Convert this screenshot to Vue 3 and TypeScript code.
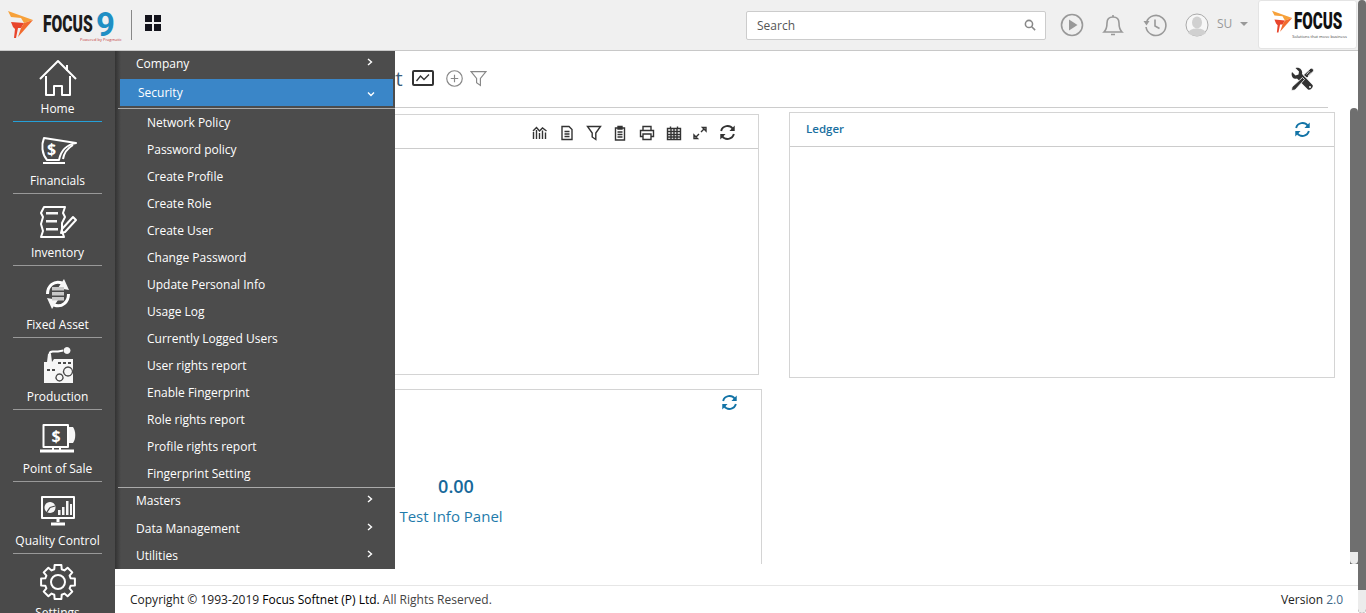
<template>
  <div class="app">
    <header class="topbar">
      <div class="brand">
        <svg class="flame" viewBox="0 0 26 28">
          <path fill="#f7a13a" d="M0 0 L25 9 L16 12 L13 7 L3 6 Z" />
          <path fill="#e8452c" d="M3 11 L16 12 L13 17 L10 17 L8 27 L6 27 L7 18 L5 16 Z" />
          <path fill="#f26b2e" d="M16 12 L25 9 L10 26 L13 17 Z" />
        </svg>
        <span class="brand-word">FOCUS</span>
        <span class="brand-nine">9</span>
        <span class="brand-sub">Powered by Pragmatic</span>
      </div>
      <div class="top-sep"></div>
      <div class="apps-grid"><i></i><i></i><i></i><i></i></div>

      <div class="top-right">
        <div class="search">
          <span>Search</span>
          <svg viewBox="0 0 14 14" class="search-icon">
            <circle cx="5.8" cy="5.8" r="4.2" />
            <path d="M9 9l4 4" />
          </svg>
        </div>
        <svg class="top-icon play" viewBox="0 0 24 24">
          <circle cx="12" cy="12" r="10.5" />
          <path class="solid" d="M9 6.5 L17.5 12 L9 17.5 Z" />
        </svg>
        <svg class="top-icon bell" viewBox="0 0 24 24">
          <path d="M3 19 C6 16 6 13 6 10 C6 6 8.500 4 12 4 C15.500 4 18 6 18 10 C18 13 18 16 21 19 Z" />
          <path d="M12 4V2M10 21.500h4" />
        </svg>
        <svg class="top-icon history" viewBox="0 0 24 24">
          <path d="M3.500 9 A10 10 0 1 1 3 14" />
          <path class="solid" d="M0.500 8 L6.500 8 L3.500 12.500 Z" />
          <path d="M12 6.500V13l4.500 2.500" />
        </svg>
        <div class="user">
          <svg class="avatar" viewBox="0 0 24 24">
            <circle class="avatar-bg" cx="12" cy="12" r="11" />
            <ellipse class="avatar-head" cx="12" cy="9.500" rx="5" ry="6" />
            <path class="avatar-head" d="M3 20 C5 16 9 15.500 12 15.500 C15 15.500 19 16 21 20 C17 24 7 24 3 20 Z" />
          </svg>
          <span class="user-name">SU</span>
          <span class="caret"></span>
        </div>
        <div class="company-logo">
          <div class="company-row">
            <svg class="flame small" viewBox="0 0 26 28">
              <path fill="#f7a13a" d="M0 0 L25 9 L16 12 L13 7 L3 6 Z" />
              <path fill="#e8452c" d="M3 11 L16 12 L13 17 L10 17 L8 27 L6 27 L7 18 L5 16 Z" />
              <path fill="#f26b2e" d="M16 12 L25 9 L10 26 L13 17 Z" />
            </svg>
            <span class="company-word">FOCUS</span>
          </div>
          <span class="company-sub">Solutions that move business</span>
        </div>
      </div>
    </header>

    <div class="body">
      <nav class="sidebar">
        <a v-for="(item, i) in navItems" :key="item.label" class="nav-item" :class="{ first: i === 0 }">
          <svg class="nav-icon" viewBox="0 0 40 40">
            <path
              v-for="(p, j) in item.paths"
              :key="j"
              :d="p.d"
              :class="'nav-' + (p.kind ?? 'line')"
            />
            <text v-if="item.sign" class="nav-sign" :x="item.sign.x" :y="item.sign.y">$</text>
          </svg>
          <span class="nav-label">{{ item.label }}</span>
        </a>
      </nav>

      <div class="main">
        <div class="content">
          <div class="title-row">
            <span class="title">Dashboard Report</span>
            <svg class="chart-btn" viewBox="0 0 22 16">
              <rect x="1" y="1" width="20" height="14" rx="1" />
              <path d="M4.500 11 L8.500 6 L12 9.500 L17 4.500" />
            </svg>
            <svg class="title-icon add" viewBox="0 0 16 16">
              <circle cx="8" cy="8" r="7.300" />
              <path d="M8 4.500v7M4.500 8h7" />
            </svg>
            <svg class="title-icon filter" viewBox="0 0 16 16">
              <path d="M1 1.500h14L9.800 8v6.500L6.200 12V8Z" />
            </svg>
            <svg class="tools" viewBox="0 0 24 24">
              <path class="tool-solid" d="M2 5 L5.500 8.500 L8.500 7.500 L9 4.500 L5.500 1 C9.500 -0.500 13 3 12 7 L22.500 18 C24 20 20 24 18 22.500 L7 11.500 C3.500 13 0.500 9.500 2 5 Z" />
              <circle class="tool-hole" cx="20" cy="20" r="1" />
              <path class="tool-driver" d="M21 1 C23 1.500 24 3 23.500 4 L17 11 L13.500 8 Z M12.500 10.500 L14.500 12.500 L5 23 L1.500 23.500 L2 20 Z" />
              <path class="tool-stripe" d="M19.500 4 L16.500 7.500 M21 5.500 L18 9" />
            </svg>
          </div>

          <div class="panels">
            <div class="col-left">
              <section class="panel report-panel">
                <div class="panel-head">
                  <div class="head-tools">
                    <svg v-for="t in panelTools" :key="t.name" class="tool-icon" viewBox="0 0 16 16">
                      <path :d="t.d" />
                    </svg>
                    <svg class="tool-icon refresh dark" viewBox="0 0 16 16">
                      <path d="M2 6.500A6.200 6.200 0 0 1 13 4.500M14 9.500A6.200 6.200 0 0 1 3 11.500" />
                      <path class="solid" d="M14.800 1.500v5h-5ZM1.200 14.500v-5h5Z" />
                    </svg>
                  </div>
                </div>
              </section>

              <section class="panel info-panel">
                <svg class="tool-icon refresh info-refresh" viewBox="0 0 16 16">
                  <path d="M2 6.500A6.200 6.200 0 0 1 13 4.500M14 9.500A6.200 6.200 0 0 1 3 11.500" />
                  <path class="solid" d="M14.800 1.500v5h-5ZM1.200 14.500v-5h5Z" />
                </svg>
                <div class="info-value">0.00</div>
                <div class="info-name">Test Info Panel</div>
              </section>
            </div>

            <section class="panel ledger-panel">
              <div class="panel-head ledger-head">
                <span class="panel-title">Ledger</span>
                <svg class="tool-icon refresh" viewBox="0 0 16 16">
                  <path d="M2 6.500A6.200 6.200 0 0 1 13 4.500M14 9.500A6.200 6.200 0 0 1 3 11.500" />
                  <path class="solid" d="M14.800 1.500v5h-5ZM1.200 14.500v-5h5Z" />
                </svg>
              </div>
            </section>
          </div>
        </div>

        <footer class="footer">
          <span>Copyright © 1993-2019 <b>Focus Softnet (P) Ltd.</b> <em>All Rights Reserved.</em></span>
          <span>Version <em class="ver">2.0</em></span>
        </footer>
      </div>
    </div>

    <!-- flyout sits over the dashboard -->
    <aside class="flyout">
      <div v-for="m in menuBefore" :key="m" class="menu-row">
        <span>{{ m }}</span>
        <svg class="chev" viewBox="0 0 8 8"><path d="M2 1l3.500 3L2 7" /></svg>
      </div>
      <div class="menu-active">
        <span>Security</span>
        <svg class="chev down" viewBox="0 0 8 8"><path d="M1 2.500l3 3 3-3" /></svg>
      </div>
      <div class="sub-list">
        <div v-for="s in securityItems" :key="s" class="sub-row">{{ s }}</div>
      </div>
      <div v-for="m in menuAfter" :key="m" class="menu-row">
        <span>{{ m }}</span>
        <svg class="chev" viewBox="0 0 8 8"><path d="M2 1l3.500 3L2 7" /></svg>
      </div>
    </aside>

    <div class="scroll-outer"><div class="thumb-end"></div></div>
    <div class="scroll-inner"><div class="thumb-end"></div></div>
  </div>
</template>

<script setup lang="ts">
type PathKind = 'line' | 'thick' | 'fill' | 'grey' | 'dark' | 'cut';

interface IconPath {
  d: string;
  kind?: PathKind;
}

interface NavItem {
  label: string;
  paths: IconPath[];
  sign?: { x: number; y: number };
}

const gearPath = (): string => {
  const pts: string[] = [];
  const teeth = 8;
  for (let i = 0; i < teeth; i++) {
    const a = (i / teeth) * Math.PI * 2 - Math.PI / 2;
    const step = Math.PI / teeth;
    const corners: [number, number][] = [
      [a - step * 0.5, 17.2],
      [a + step * 0.5, 17.2],
      [a + step * 0.72, 13.2],
      [a + step * 1.28, 13.2],
    ];
    corners.forEach(([ang, r]) => {
      pts.push(`${(20 + r * Math.cos(ang)).toFixed(1)} ${(20 + r * Math.sin(ang)).toFixed(1)}`);
    });
  }
  return `M${pts.join(' L')} Z`;
};

const navItems: NavItem[] = [
  {
    label: 'Home',
    paths: [
      { d: 'M2 21 L20 3 L38 21' },
      { d: 'M29 7v6' },
      { d: 'M8 18 V37 H16 V28 H24 V37 H32 V18' },
    ],
  },
  {
    label: 'Financials',
    sign: { x: 9, y: 25 },
    paths: [
      { d: 'M6 8 L38 13 C28 15 23 20 21 30 H9 C4 24 3 15 6 8 Z' },
      { d: 'M25 29 C26 23 30 18 35 15' },
      { d: 'M5 33 H27' },
    ],
  },
  {
    label: 'Inventory',
    paths: [
      { d: 'M6 5 H27 L25 11 L27 15 L24 21 V29 L26 35 H3 L5 29 L3 22 L5 15 L3 11 Z' },
      { d: 'M8 10 H20 V12.500 H8 Z M8 18 H19 V20.500 H8 Z M8 26 H20 V28.500 H8 Z', kind: 'fill' },
      { d: 'M24 27 L35 15 L38 18 L27 30 L23 31 Z' },
    ],
  },
  {
    label: 'Fixed Asset',
    paths: [
      { d: 'M9.500 20 C9.500 12 16 6 24 9', kind: 'thick' },
      { d: 'M31 16 L20 14 L26 5 Z', kind: 'fill' },
      { d: 'M30.500 20 C30.500 28 24 34 16 31', kind: 'thick' },
      { d: 'M9 24 L20 26 L14 35 Z', kind: 'fill' },
      { d: 'M14 13 H26 V16.500 H14 Z M14 18 H26 V21.500 H14 Z M14 23 H26 V26.500 H14 Z', kind: 'grey' },
    ],
  },
  {
    label: 'Production',
    paths: [
      { d: 'M9 16 L10 8 L13 8 L14 16 L16 13 H35 V37 H6 V16 Z', kind: 'fill' },
      { d: 'M11.500 8 C12 4 15 6 18 5.500 C20 5.500 22 5 25 4.500' },
      { d: 'M29 1 a3.500 3.500 0 1 0 .01 0 Z', kind: 'fill' },
      { d: 'M20 16 h3 v2 h-3 Z M25 16 h3 v2 h-3 Z M30 16 h3 v2 h-3 Z M9 23 h3 v2 h-3 Z M14 23 h3 v2 h-3 Z', kind: 'dark' },
      { d: 'M30 21 a4.500 4.500 0 1 0 .01 0 Z M21.500 28 a3.500 3.500 0 1 0 .01 0 Z', kind: 'cut' },
    ],
  },
  {
    label: 'Point of Sale',
    sign: { x: 13.500, y: 24 },
    paths: [
      { d: 'M5.500 7 H30 V29 H5.500 Z' },
      { d: 'M31 9 H35 C38 13 38 21 35 25 H31 Z', kind: 'fill' },
      { d: 'M15 29 V32 M22 29 V32' },
      { d: 'M2 33 H36', kind: 'thick' },
    ],
  },
  {
    label: 'Quality Control',
    paths: [
      { d: 'M4 7 H36 V28 H4 Z' },
      { d: 'M12 12 a5.500 5.500 0 1 0 .01 0 Z', kind: 'fill' },
      { d: 'M12 17.500 L17 16 M12 17.500 L9 22', kind: 'cut' },
      { d: 'M20 20 h2.500 v5 h-2.500 Z M24 17 h2.500 v8 h-2.500 Z M28 11 h2.500 v14 h-2.500 Z M32 14 h2 v11 h-2 Z', kind: 'fill' },
      { d: 'M20 28 V32 M13 34 H27', kind: 'thick' },
    ],
  },
  {
    label: 'Settings',
    paths: [{ d: gearPath() }, { d: 'M27 20 a7 7 0 1 1 -14 0 a7 7 0 1 1 14 0 Z' }],
  },
];

const panelTools = [
  { name: 'chart', d: 'M1.500 14V7M4.500 14V5M7.500 14V8M10.500 14V5.500M13.500 14V7.500M1 6 L4.500 2.500 L7.500 6 L10.500 3 L14.500 6' },
  { name: 'doc', d: 'M3 1.500h7l3 3V14.500H3ZM5.500 6.500h5M5.500 9h5M5.500 11.500h5' },
  { name: 'filter', d: 'M1.500 1.500h13L9.800 8v6.500L6.200 12V8Z' },
  { name: 'clip', d: 'M3.500 3h9V15h-9ZM6 1.500h4V4H6ZM5.500 7h5M5.500 9.500h5M5.500 12h5' },
  { name: 'print', d: 'M4 5V1.500h8V5M4 11.500H1.500V5.500h13v6H12M4 9h8v5.500H4Z' },
  { name: 'calendar', d: 'M1.500 3.500h13v11h-13ZM1.500 6.500h13M1.500 9.500h13M1.500 12h13M5 3.500v11M8 3.500v11M11 3.500v11M4.500 1.500v2M11.500 1.500v2' },
  { name: 'expand', d: 'M10.500 2.500h3.500v3.500ZM9 7l3-3M5.500 13.500H2V10ZM7 9l-3 3' },
];

const menuBefore = ['Company'];
const menuAfter = ['Masters', 'Data Management', 'Utilities'];

const securityItems = [
  'Network Policy',
  'Password policy',
  'Create Profile',
  'Create Role',
  'Create User',
  'Change Password',
  'Update Personal Info',
  'Usage Log',
  'Currently Logged Users',
  'User rights report',
  'Enable Fingerprint',
  'Role rights report',
  'Profile rights report',
  'Fingerprint Setting',
];
</script>

<style>
html,
body {
  margin: 0;
  height: 100%;
  overflow: hidden;
  background: #fff;
}
</style>

<style scoped>
.app {
  position: relative;
  width: 1366px;
  height: 613px;
  overflow: hidden;
  display: flex;
  flex-direction: column;
  font-family: "Open Sans", "Liberation Sans", sans-serif;
  font-size: 12px;
  color: #444;
}

.topbar {
  height: 50px;
  flex: none;
  display: flex;
  align-items: center;
  background: #f0f0f0;
  border-bottom: 1px solid #c8c8c8;
  padding-left: 8px;
}

.brand {
  position: relative;
  width: 123px;
  height: 30px;
  display: flex;
  align-items: center;
}

.flame {
  width: 26px;
  height: 28px;
  flex: none;
}

.flame.small {
  width: 21px;
  height: 24px;
}

.brand-word {
  margin-left: 9px;
  width: 50px;
  font-family: "Roboto", sans-serif;
  font-weight: 900;
  font-size: 23px;
  line-height: 22px;
  color: #1b1b1b;
  display: inline-block;
  transform: scaleX(0.68);
  transform-origin: left center;
  white-space: nowrap;
}

.brand-nine {
  margin-left: 3px;
  font-family: "Roboto", sans-serif;
  font-weight: 700;
  font-size: 33px;
  line-height: 22px;
  color: #1f8fc4;
}

.brand-sub {
  position: absolute;
  left: 72px;
  top: 27px;
  font-size: 4px;
  line-height: 5px;
  color: #c43a3a;
  white-space: nowrap;
}

.top-sep {
  width: 1px;
  height: 30px;
  background: #888;
}

.apps-grid {
  margin-left: 13px;
  width: 16px;
  height: 16px;
  margin-top: -4px;
  display: grid;
  grid-template-columns: 7px 7px;
  grid-template-rows: 7px 7px;
  gap: 2px;
}

.apps-grid i {
  background: #14141c;
}

.top-right {
  margin-left: auto;
  display: flex;
  align-items: center;
  height: 100%;
  padding-right: 9px;
}

.search {
  width: 279px;
  height: 27px;
  border: 1px solid #ccc;
  border-radius: 2px;
  background: #fff;
  display: flex;
  align-items: center;
  justify-content: space-between;
  padding: 0 9px 0 10px;
  font-size: 12px;
  color: #555;
}

.search-icon {
  width: 12px;
  height: 12px;
  fill: none;
  stroke: #888;
  stroke-width: 1.800;
}

.top-icon {
  fill: none;
  stroke: #999;
  stroke-width: 1.600;
  width: 24px;
  height: 24px;
  flex: none;
}

.top-icon .solid {
  fill: #999;
  stroke: none;
}

.play {
  margin-left: 14px;
}

.bell {
  margin-left: 17px;
}

.history {
  margin-left: 18px;
}

.user {
  display: flex;
  align-items: center;
  margin-left: 18px;
  width: 73px;
}

.avatar {
  width: 24px;
  height: 24px;
  flex: none;
}

.avatar-bg {
  fill: #f7f7f7;
  stroke: #aaa;
  stroke-width: 1;
}

.avatar-head {
  fill: #d0d0d0;
}

.user-name {
  margin-left: 8px;
  font-size: 12px;
  color: #999;
  margin-top: -3px;
}

.caret {
  margin-left: 8px;
  margin-top: -3px;
  border-left: 4px solid transparent;
  border-right: 4px solid transparent;
  border-top: 4px solid #999;
}

.company-logo {
  width: 97px;
  height: 47px;
  background: #fff;
  border: 1px solid #e4e4e4;
  border-radius: 3px;
  display: flex;
  flex-direction: column;
  align-items: center;
  justify-content: center;
  margin-top: -1px;
}

.company-row {
  display: flex;
  align-items: center;
  height: 24px;
  width: 72px;
}

.company-word {
  margin-left: 1px;
  font-family: "Roboto", sans-serif;
  font-weight: 900;
  font-size: 23px;
  line-height: 24px;
  color: #111;
  display: inline-block;
  transform: scaleX(0.66);
  transform-origin: left center;
}

.company-sub {
  font-size: 4px;
  line-height: 5px;
  color: #444;
  margin-left: 24px;
  white-space: nowrap;
}

.body {
  flex: 1;
  display: flex;
  min-height: 0;
}

.sidebar {
  width: 115px;
  flex: none;
  background: #4a4a4a;
  overflow: hidden;
}

.nav-item {
  display: flex;
  flex-direction: column;
  align-items: center;
  height: 72px;
  margin: 0 13px;
  padding-top: 8px;
  box-sizing: border-box;
  border-bottom: 1px solid #999;
}

.nav-item.first {
  border-bottom-color: #25a0d8;
  height: 71px;
  padding-top: 7px;
}

.nav-icon {
  width: 40px;
  height: 40px;
  flex: none;
}

.nav-line {
  fill: none;
  stroke: #fff;
  stroke-width: 2;
  stroke-linejoin: round;
}

.nav-thick {
  fill: none;
  stroke: #fff;
  stroke-width: 3;
}

.nav-fill {
  fill: #f6f6f6;
}

.nav-grey {
  fill: #c9c9c9;
}

.nav-dark {
  fill: #4a4a4a;
}

.nav-cut {
  fill: none;
  stroke: #4a4a4a;
  stroke-width: 1.300;
}

.nav-sign {
  fill: #fff;
  font-family: "Open Sans", sans-serif;
  font-weight: 700;
  font-size: 16px;
}

.nav-label {
  margin-top: 1px;
  line-height: 20px;
  font-size: 12px;
  color: #fff;
  white-space: nowrap;
}

.main {
  flex: 1;
  min-width: 0;
  display: flex;
  flex-direction: column;
  background: #fff;
}

.content {
  height: 513px;
  flex: none;
  overflow: hidden;
  padding: 0 31px 0 15px;
}

.title-row {
  height: 54px;
  padding-bottom: 2px;
  display: flex;
  align-items: center;
  border-bottom: 1px solid #ccc;
  margin-right: 7px;
  padding-left: 101px;
}

.title {
  width: 171px;
  font-size: 20px;
  color: #3a5d78;
  white-space: nowrap;
}

.chart-btn {
  width: 22px;
  height: 16px;
  margin-left: 10px;
  fill: none;
  stroke: #333;
}

.chart-btn rect {
  stroke-width: 2;
}

.chart-btn path {
  stroke-width: 1.300;
}

.title-icon {
  width: 17px;
  height: 17px;
  fill: none;
  stroke: #888;
  stroke-width: 1.100;
}

.add {
  margin-left: 12px;
}

.filter {
  margin-left: 7px;
}

.tools {
  width: 24px;
  height: 24px;
  margin-left: auto;
  margin-right: 14px;
  margin-top: 1px;
}

.tool-solid {
  fill: #333;
}

.tool-hole {
  fill: #fff;
}

.tool-driver {
  fill: #333;
  stroke: #fff;
  stroke-width: 0.800;
}

.tool-stripe {
  fill: none;
  stroke: #fff;
  stroke-width: 0.800;
}

.panels {
  display: grid;
  grid-template-columns: 632px 546px;
  column-gap: 27px;
  padding-top: 4px;
  align-items: start;
}

.col-left {
  display: flex;
  flex-direction: column;
}

.panel {
  border: 1px solid #d4d4d4;
  box-sizing: border-box;
  background: #fff;
}

.report-panel {
  margin-top: 2px;
  height: 261px;
  width: 629px;
}

.panel-head {
  height: 34px;
  box-sizing: border-box;
  border-bottom: 1px solid #ccc;
  display: flex;
  align-items: center;
}

.head-tools {
  margin-left: auto;
  display: flex;
  align-items: center;
  gap: 10.700px;
  padding-right: 22px;
  margin-top: 2px;
}

.tool-icon {
  width: 16px;
  height: 16px;
  flex: none;
  fill: none;
  stroke: #333;
  stroke-width: 1.400;
}

.refresh {
  stroke: #1273a6;
  stroke-width: 1.800;
  width: 17px;
  height: 17px;
}

.refresh .solid {
  fill: #1273a6;
  stroke: none;
}

.refresh.dark {
  stroke: #333;
}

.refresh.dark .solid {
  fill: #333;
}

.info-panel {
  position: relative;
  margin-top: 14px;
  height: 200px;
  display: flex;
  flex-direction: column;
  align-items: center;
  border-bottom: none;
  padding-top: 82px;
  margin-left: 10px;
}

.info-refresh {
  position: absolute;
  right: 23px;
  top: 4px;
}

.info-value {
  font-size: 18px;
  font-weight: 600;
  line-height: 28px;
  color: #16689a;
  padding-left: 10px;
}

.info-name {
  margin-top: 5px;
  font-size: 15px;
  line-height: 22px;
  color: #1f7bab;
}

.ledger-panel {
  height: 266px;
}

.ledger-head {
  justify-content: space-between;
  padding: 0 23px 0 16px;
}

.panel-title {
  font-size: 11.500px;
  font-weight: 600;
  color: #1a6fa0;
  margin-top: -3px;
}

.footer {
  margin-top: 21px;
  height: 28px;
  border-top: 1px solid #e6e6e6;
  display: flex;
  align-items: center;
  justify-content: space-between;
  padding: 0 23px 0 15px;
  font-size: 12px;
  font-weight: 500;
  color: #222;
}

.footer b {
  font-weight: 500;
  color: #000;
}

.footer em {
  font-style: normal;
  font-weight: 400;
  color: #444;
}

.footer em.ver {
  color: #3f6a8a;
}

.flyout {
  position: absolute;
  left: 115px;
  top: 51px;
  width: 280px;
  height: 518px;
  background: linear-gradient(to right, #333 0, #4c4c4c 6px);
  color: #fff;
}

.menu-row {
  height: 27px;
  display: flex;
  align-items: center;
  justify-content: space-between;
  padding: 0 21px;
}

.menu-row span {
  margin-top: -2px;
}

.sub-list + .menu-row + .menu-row {
  margin-top: 1px;
}

.menu-active {
  margin: 1px 2px 0 5px;
  height: 27px;
  background: #3a86c8;
  display: flex;
  align-items: center;
  justify-content: space-between;
  padding: 0 18px;
}

.menu-active span {
  margin-top: -1px;
}

.chev {
  width: 8px;
  height: 8px;
  fill: none;
  stroke: #fff;
  stroke-width: 1.400;
  margin-top: -6px;
}

.chev.down {
  margin-top: 3px;
}

.sub-list {
  margin: 2px 0 0 3px;
  border-top: 1px solid #aaa;
  border-bottom: 1px solid #aaa;
}

.sub-row {
  height: 27px;
  line-height: 27px;
  padding-left: 29px;
}

.scroll-outer {
  position: absolute;
  right: 0;
  top: 0;
  width: 8px;
  height: 613px;
  background: #6f6f6f;
  border-radius: 4px;
  overflow: hidden;
}

.scroll-inner {
  position: absolute;
  left: 1350px;
  top: 108px;
  width: 8px;
  height: 456px;
  background: #6f6f6f;
  border-radius: 4px 4px 0 0;
  overflow: hidden;
}

.thumb-end {
  position: absolute;
  left: 0;
  right: 0;
  bottom: 0;
  height: 23px;
  background: #ececec;
  border-radius: 0 0 4px 4px;
}

.scroll-inner .thumb-end {
  height: 12px;
}
</style>
